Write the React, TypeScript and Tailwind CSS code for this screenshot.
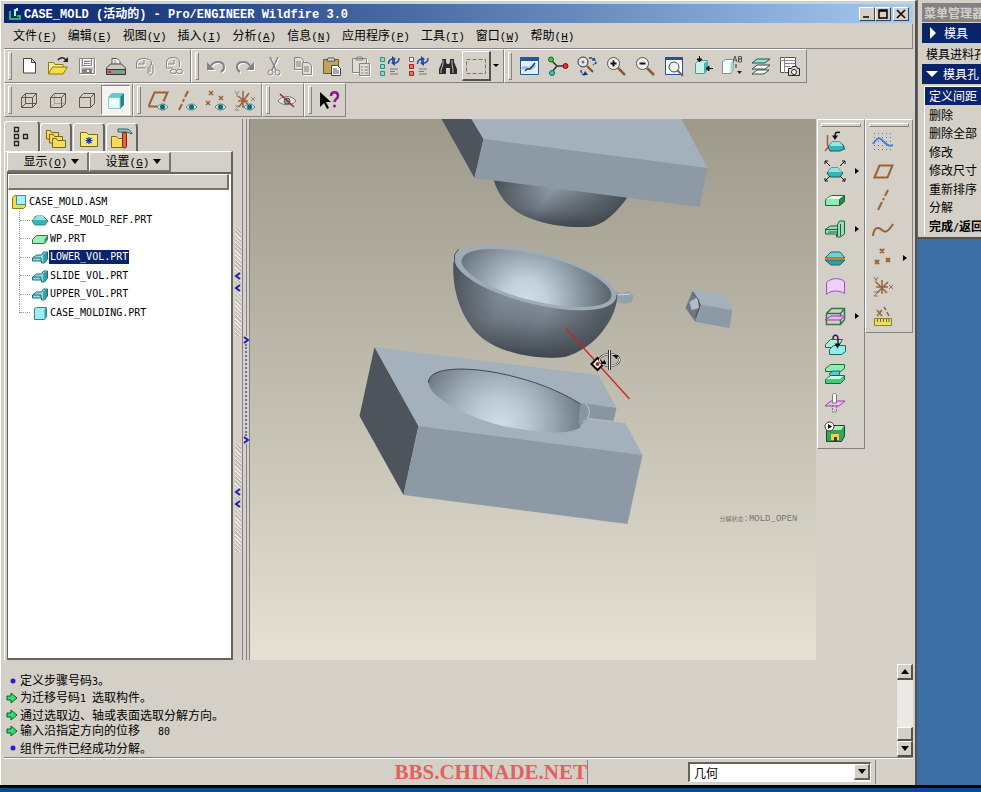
import type { ReactNode } from "react";

const teal = "#35b5b5";
const aqua = "#8fe6e2";
const brown = "#9c6238";

// Iconos de 24x24, uno por herramienta
const icons: Record<string, ReactNode> = {
  nuevo: <path d="M6.5 4.5h8l4 4v10.5h-12zM14.5 4.5v4h4" fill="#fff" stroke="#444" />,
  abrir: (
    <>
      <path d="M2.5 20V8.500h5l1.500 2h8V13" fill="#f7ee9a" stroke="#8a7a1a" />
      <path d="M2.500 20l4-7h15l-4.500 7z" fill="#f5df40" stroke="#8a7a1a" />
      <path d="M12 6c2-3 6-3 8 0" fill="none" stroke="#222" strokeWidth="1.500" />
      <path d="M22 3v5h-5z" fill="#222" />
    </>
  ),
  guardar: (
    <g fill="none" stroke="#848284">
      <path d="M4.500 4.500h15v15h-15z" />
      <path d="M7.500 4.500v7h9v-7M9 7.500h6M9 9.500h6" />
      <path d="M7.500 19v-4h9v4" fill="#848284" />
      <path d="M13 16v2" stroke="#fff" strokeWidth="2" />
    </g>
  ),
  imprimir: (
    <>
      <path d="M8 11V4.500h5l3 3V12" fill="#fff" stroke="#555" />
      <path d="M9.500 7h3M9.500 9h4" stroke="#888" />
      <path d="M2.500 14l4-4h11l4 4v3h-19z" fill="#c9c7c0" stroke="#444" />
      <path d="M2.500 15.500h19v5h-19z" fill="#8f958d" stroke="#333" />
      <path d="M4 18h3" stroke="#e02020" strokeWidth="2" />
      <path d="M14 18h5" stroke="#50c060" strokeWidth="2" />
    </>
  ),
  correo: (
    <g fill="none" stroke="#848284">
      <path d="M3.500 14v-5c0-6 15-6 15 0v2M3.500 14h9M5 10l6 0v-4" />
      <path d="M15 13v5c0 4 5 4 5 0v-6c0-2-3-2-3 0v6" />
    </g>
  ),
  enlace: (
    <g fill="none" stroke="#848284">
      <path d="M4.500 14V8c0-6 13-6 13 0v5M4.500 14h6M6 10h6V6" />
      <rect x="8.500" y="15.500" width="6" height="4" rx="2" />
      <rect x="14.500" y="15.500" width="6" height="4" rx="2" />
    </g>
  ),
  deshacer: (
    <>
      <path d="M7 12c3-6 13-5 13 1 0 2-1 4-3 5" fill="none" stroke="#848284" strokeWidth="2" />
      <path d="M3 8v8h8z" fill="#848284" />
    </>
  ),
  rehacer: (
    <>
      <path d="M17 12c-3-6-13-5-13 1 0 2 1 4 3 5" fill="none" stroke="#848284" strokeWidth="2" />
      <path d="M21 8v8h-8z" fill="#848284" />
    </>
  ),
  cortar: (
    <g fill="none" stroke="#848284">
      <path d="M8 3l6 13M16 3l-6 13" strokeWidth="1.500" />
      <circle cx="8.500" cy="18.500" r="2.500" />
      <circle cx="15.500" cy="18.500" r="2.500" />
    </g>
  ),
  copiar: (
    <g fill="#dedbd3" stroke="#848284">
      <path d="M3.500 3.500h6l3 3v9h-9zM5 8h5M5 10h5M5 12h5" />
      <path d="M11.500 8.500h6l3 3v9h-9zM13 13h5M13 15h5M13 17h5" />
    </g>
  ),
  pegar: (
    <>
      <path d="M3.500 5.500h15v14h-15z" fill="#c0a45c" stroke="#6d5a2c" />
      <path d="M7 7l1-3h6l1 3z" fill="#ddd" stroke="#555" />
      <path d="M11.500 11.500h6l3 3v7h-9z" fill="#fff" stroke="#444" />
      <path d="M13 15h4M13 17h6M13 19h6" stroke="#555" />
    </>
  ),
  especial: (
    <g fill="#dedbd3" stroke="#848284">
      <path d="M3.500 4.500h14v14h-14zM7 6l1-3h5l1 3z" />
      <path d="M10.500 9.500h10v12h-10zM12 13h2M12 16h2M12 19h2M15.500 13h4M15.500 16h4M15.500 19h4" />
    </g>
  ),
  regenerar: (
    <>
      <path d="M2.500 3.500h4v4h-4zM2.500 10.500h4v4h-4zM2.500 17.500h4v4h-4z" fill="#7fe0d0" stroke="#2f8f80" />
      <path d="M10.500 10c0-4 2-5 5-5M21 4c0 4-2 5-5 5" fill="none" stroke="#1f4fa0" strokeWidth="1.500" />
      <path d="M14 2l4 3-4 3zM17 6l-4 3 4 3z" fill="#1f4fa0" />
      <path d="M12 15h8M12 17.500h5M12 20h8" stroke="#777" />
    </>
  ),
  regenerar2: (
    <>
      <path d="M2.500 3.500h4v4h-4z" fill="#fff" stroke="#c04040" />
      <path d="M2.500 10.500h4v4h-4zM2.500 17.500h4v4h-4z" fill="#f07060" stroke="#b02020" />
      <path d="M10.500 10c0-4 2-5 5-5M21 4c0 4-2 5-5 5" fill="none" stroke="#1f4fa0" strokeWidth="1.500" />
      <path d="M14 2l4 3-4 3zM17 6l-4 3 4 3z" fill="#1f4fa0" />
      <path d="M12 15h8M12 17.500h5M12 20h8" stroke="#777" />
    </>
  ),
  buscar: (
    <>
      <path d="M6 5h4v3l1 2h2l1-2V5h4v3l3 7v5h-7v-6h-4v6H3v-5l3-7z" fill="#2b2b2b" />
      <path d="M7 6v4l-2 6v3M16 6v4l1 6v3" fill="none" stroke="#bbb" />
    </>
  ),
  seleccion: <path d="M2.500 5.500h19v14h-19z" fill="none" stroke="#777" strokeDasharray="4 2" />,
  repintar: (
    <>
      <path d="M3.500 3.500h18v17h-18z" fill="#e4f0fa" stroke="#2058a8" />
      <path d="M3 3h19v4H3z" fill="#2058a8" />
      <path d="M5 15c4-5 7 4 13-4" fill="none" stroke="#9cc4e4" strokeWidth="3" />
      <path d="M8 17l2-2h3l5-6" stroke="#203870" strokeWidth="1.500" />
    </>
  ),
  centro: (
    <>
      <path d="M5 6l6 6h9M11 12l-5 6" fill="none" stroke="#333" strokeWidth="1.500" />
      <circle cx="5" cy="5.500" r="2.500" fill="#3cc83c" stroke="#186018" />
      <circle cx="19.500" cy="12" r="2.500" fill="#e03030" stroke="#701010" />
      <circle cx="6" cy="19" r="2.500" fill="#30c8c0" stroke="#106060" />
    </>
  ),
  orientar: (
    <>
      <circle cx="8" cy="8" r="5" fill="#e5e8e6" stroke="#333" />
      <path d="M12 12l6 6" stroke="#8a4a20" strokeWidth="2" />
      <circle cx="8" cy="8" r="1.500" fill="#777" />
      <path d="M14 4h4v4M19 4l2 5-3 2M6 16c0 4 2 5 5 5" fill="none" stroke="#1f4fa0" strokeWidth="1.500" strokeDasharray="3 1" />
      <path d="M10 17l3 4h-5z" fill="#102f90" />
    </>
  ),
  acercar: (
    <>
      <path d="M14 14l7 7" stroke="#8a5a40" strokeWidth="2.500" />
      <circle cx="9.500" cy="9.500" r="6" fill="#f1f1ee" stroke="#555" />
      <path d="M6.500 9.500h6M9.500 6.500v6" stroke="#111" strokeWidth="2" />
    </>
  ),
  alejar: (
    <>
      <path d="M14 14l7 7" stroke="#8a5a40" strokeWidth="2.500" />
      <circle cx="9.500" cy="9.500" r="6" fill="#f1f1ee" stroke="#555" />
      <path d="M6.500 9.500h6" stroke="#111" strokeWidth="2" />
    </>
  ),
  ajustar: (
    <>
      <path d="M3.500 3.500h17v17h-17z" fill="#fff" stroke="#28509c" />
      <path d="M3 3h18v3H3z" fill="#28509c" />
      <path d="M15 16l6 6" stroke="#8a5a40" strokeWidth="2" />
      <circle cx="12" cy="13" r="5" fill="#eef4f4" stroke="#444" />
    </>
  ),
  reorientar: (
    <>
      <path d="M4.500 9.500l3-3h9v9l-3 4h-9z" fill="#c8f4f0" stroke="#509890" />
      <path d="M13 9.500v10l4-4v-9z" fill="#45b5ad" />
      <path d="M8.500 2v3M6 5h5L8.500 8zM22 14.500h-4M18 12v5l-3-2.500z" fill="#111" stroke="#111" />
    </>
  ),
  vistas: (
    <>
      <path d="M2.500 7.500l3-2h8v10l-3 4h-8z" fill="#f3ffff" stroke="#888" />
      <path d="M10.500 9v10l3-4V6z" fill="#a0d8d4" />
      <path d="M13 8l2-6 2 6M13.500 6h3M18.500 8V2.500h3v2.500h-3M18.500 5h3v3h-3" fill="none" stroke="#555" />
      <path d="M17 17h5l-2.500 3z" fill="#222" />
      <path d="M16 10v4" stroke="#333" />
    </>
  ),
  capas: (
    <g stroke="#30504c">
      <path d="M3 20l5-4h12l-5 4z" fill="#fff" />
      <path d="M3 15l5-4h13l-5 4z" fill="#fff" />
      <path d="M3 9l5-4h13l-5 4z" fill="#8ce4dc" />
    </g>
  ),
  gestor: (
    <>
      <path d="M2.500 3.500h15v15h-15z" fill="#fff" stroke="#555" />
      <path d="M2 6.500h16M6.500 3v16M7 9.500h10M7 12.500h5" stroke="#888" />
      <path d="M10.500 14.500h3l1-2h4l1 2h2v7h-11z" fill="#d8d8d0" stroke="#222" />
      <circle cx="16" cy="18" r="2.500" fill="#fff" stroke="#222" />
    </>
  ),
  alambre: (
    <path d="M4.500 9.500h11v10h-11zM8.500 5.500h11v10h-11zM4.500 9.500l4-4M15.500 9.500l4-4M15.500 19.500l4-4M4.500 19.500l4-4" fill="none" stroke="#5c5850" />
  ),
  oculta: (
    <>
      <path d="M8.500 5.500v10h11M4.500 19.500l4-4" fill="none" stroke="#aaa69c" />
      <path d="M4.500 9.500h11v10h-11zM4.500 9.500l4-4h11v10l-4 4M15.500 9.500l4-4" fill="none" stroke="#5c5850" />
    </>
  ),
  sinoculta: <path d="M4.500 9.500h11v10h-11zM4.500 9.500l4-4h11v10l-4 4M15.500 9.500l4-4" fill="none" stroke="#5c5850" />,
  sombreado: (
    <>
      <path d="M4 9l4-4h12l-4 4z" fill="#58d0d0" />
      <path d="M16 9l4-4v12l-4 4z" fill="#1c8888" />
      <path d="M4.500 9.500h11.500v11h-11.500z" fill="#eaffff" stroke="#88c8c8" />
    </>
  ),
  ojoPlano: <path d="M2.500 18.500l6-14h13l-4 9M2.500 18.500h9" fill="none" stroke={brown} strokeWidth="2" />,
  ojoEje: <path d="M13 3l-3 6M9 11l-1 3M7 16l-3 6" stroke={brown} strokeWidth="2" />,
  ojoPunto: (
    <path d="M5 3l4 4M9 3l-4 4M15 8l4 4M19 8l-4 4M2 13l4 4M6 13l-4 4" stroke={brown} strokeWidth="1.500" />
  ),
  ojoCsys: (
    <>
      <path d="M5 8l12 10M16 5L6 19M10 3v17M5 13h10" stroke={brown} strokeWidth="1.500" />
      <path d="M2 3l2 3 2-3M4 6v3M18 9l4 4M22 9l-4 4M2 18h4l-4 4h4" fill="none" stroke="#888" />
    </>
  ),
  girar: (
    <>
      <path d="M3 13c4-6 14-6 18 0-4 5-14 5-18 0z" fill="#e4e4e0" stroke="#777" />
      <circle cx="12" cy="13" r="3" fill="#6ca8a8" stroke="#555" />
      <path d="M5 6l14 13" stroke="#b02020" strokeWidth="1.500" />
    </>
  ),
  ayuda: (
    <>
      <path d="M3 4v15l4-4 3 6 2-1-3-6h5z" fill="#000" />
      <path d="M14 8c0-5 7-5 7 0 0 3-3.500 3-3.500 6" fill="none" stroke="#8a1a8a" strokeWidth="2.500" />
      <circle cx="17.500" cy="18" r="1.500" fill="#8a1a8a" />
    </>
  ),
  localizar: (
    <>
      <path d="M4.500 5v11M2 21l4-5 16 3" fill="none" stroke="#a06038" strokeWidth="1.500" />
      <path d="M5 17l4-5h8l4 4v3l-4 2H7z" fill={teal} stroke="#135c5c" />
      <path d="M6 16l3-4h8l3 4z" fill={aqua} />
      <path d="M17 2.500c-4-1-5 0-5 4" fill="none" stroke="#111" strokeWidth="1.500" />
      <path d="M9 5.500h6L12 10z" fill="#111" />
    </>
  ),
  contraer: (
    <>
      <path d="M4 14l4-5h7l5 5-3 4H7z" fill={teal} stroke="#135c5c" />
      <path d="M5 13l3-4h7l4 4z" fill={aqua} />
      <path d="M2 2l5 5M22 2l-5 5M2 22l5-5M22 22l-5-5M2 5V2h3M19 2h3v3M2 19v3h3M22 19v3h-3" fill="none" stroke="#111" />
    </>
  ),
  pieza: (
    <>
      <path d="M2.500 11.500l6-4h13v6l-5 4h-14z" fill="#8cecb4" stroke="#226a3c" />
      <path d="M3 11l6-3h12l-4 3z" fill="#e0ffe8" />
      <path d="M16.500 11.500v6l5-4v-6z" fill="#208850" stroke="#226a3c" />
    </>
  ),
  volumen: (
    <>
      <path d="M2.500 12l5-3h6l3-5h5v13l-4 3h-4v-3h-11z" fill="#9cdcbc" stroke="#20603c" />
      <path d="M3 12.500h11M14.500 8v11M17.500 7v12M5 15h9" fill="none" stroke="#20603c" />
    </>
  ),
  silueta: (
    <>
      <path d="M2 12l6-6h9l5 6z" fill="#68d4d8" stroke="#206870" />
      <path d="M2 14l6 5h9l5-5z" fill="#309ca0" stroke="#206870" />
      <path d="M2 13h20" stroke="#e0702c" strokeWidth="2" />
    </>
  ),
  superficie: <path d="M3.500 19.500v-12c5-5 13-5 18-1v12c-5-3-13-4-18 1z" fill="#ecd0f8" stroke="#a050b8" />,
  particion: (
    <>
      <path d="M3.500 9.500l5-5h13v11l-4 5h-14zM3.500 9.500h14v11M17.500 9.500l4-5" fill="none" stroke="#307848" strokeWidth="1.500" />
      <path d="M2 16l6-4h14l-5 4z" fill="#e8b8f0" stroke="#903ca0" />
    </>
  ),
  dividir: (
    <>
      <path d="M2.500 11.500l5-5h12l-3 5v3h-14z" fill="#a8f0dc" stroke="#206848" />
      <path d="M6.500 16.500l4-4h12v6l-4 3h-12z" fill="#94ece8" stroke="#206868" />
      <path d="M10 6c0-5 5-5 5 0v5" fill="none" stroke="#301850" strokeWidth="1.500" />
      <path d="M11.500 10.500h6l-3 5z" fill="#111" />
    </>
  ),
  apertura: (
    <>
      <path d="M2.500 6.500l5-4h14v4l-4 3h-15z" fill="#90f0b0" stroke="#186838" />
      <path d="M6 12l4-3h7l-1 5H8z" fill="#58c8e0" stroke="#206080" />
      <path d="M2.500 17.500l5-4h14v4l-4 4h-15z" fill="#48c878" stroke="#186838" />
      <path d="M3 17l5-3h12l-3 3z" fill="#c8ffd8" />
    </>
  ),
  eyector: (
    <>
      <path d="M2 15l6-5h14l-6 5z" fill="#ecb8f4" stroke="#8c4898" />
      <path d="M9.500 12V4c0-2 4-2 4 0v8z" fill="#fff" stroke="#777" />
      <path d="M9.500 14v7h4v-7" fill="none" stroke="#777" strokeDasharray="2 1" />
    </>
  ),
  catalogo: (
    <>
      <path d="M3.500 10.500l5-5h13v11l-3 5h-15z" fill="#34a45c" stroke="#164c28" />
      <path d="M4 10l5-4h12l-3 4z" fill="#a8f0bc" />
      <path d="M8 14h8v6h-2v-3h-3v3H8z" fill="#f0d040" />
      <path d="M11 17h3v4h-3z" fill="#702020" />
      <circle cx="6.500" cy="6.500" r="4.500" fill="#fff" stroke="#333" />
      <path d="M5 4v5l4-2.500z" fill="#111" />
    </>
  ),
  boceto: (
    <>
      <path d="M3 3.500h19M3 7.500h19M3 11.500h19M3 15.500h19M3 19.500h19" stroke="#4878c0" strokeDasharray="1 3" />
      <path d="M2 14c5-8 7-6 10-3s6 6 10 4" fill="none" stroke="#3c80dc" strokeWidth="2" />
    </>
  ),
  plano: <path d="M3.500 18.500l5-12h13l-5 12z" fill="none" stroke={brown} strokeWidth="2" />,
  eje: <path d="M17 2l-3 6M13 10l-1 2M11 14l-4 8" stroke={brown} strokeWidth="2" />,
  curva: <path d="M2 19c1-10 6-9 9-6s6 2 11-6" fill="none" stroke={brown} strokeWidth="2" />,
  puntos: <path d="M9 3l4 4M13 3l-4 4M4 14l4 4M8 14l-4 4M15 12l4 4M19 12l-4 4" stroke={brown} strokeWidth="2" />,
  csys: (
    <>
      <path d="M5 7l11 11M17 7L6 18M11 5v14M5 12h12" stroke={brown} strokeWidth="1.500" />
      <path d="M3 2l2 3 2-3M5 5v3M18 10l4 4M22 10l-4 4M3 17h4l-4 4h4" fill="none" stroke="#777" />
    </>
  ),
  medir: (
    <>
      <path d="M3.500 14.500h17v7h-17z" fill="#e8e060" stroke="#8c8428" />
      <path d="M6.500 15v3M9.500 15v3M12.500 15v3M15.500 15v3M18 15v3" stroke="#6c6418" />
      <path d="M6 6l5 6M11 6l-5 6M13 3l2 3M16 8l2 4" stroke={brown} strokeWidth="1.500" />
    </>
  ),
  arbol: <path d="M4.500 2.500h4v4h-4zM4.500 9.500h4v4h-4zM4.500 16.500h4v4h-4zM13.500 9.500h4v4h-4z" fill="none" stroke="#222" strokeWidth="1.300" />,
  carpetas: (
    <g fill="#f2dc58" stroke="#7c6814">
      <path d="M2.500 13V4.500h4l1 2h7V13z" />
      <path d="M5.500 17V8.500h4l1 2h8V17z" />
      <path d="M8.500 21.500v-9h4l1 2h8v7z" />
    </g>
  ),
  favoritos: (
    <>
      <path d="M3.500 20.500v-14h6l2 2h9v12z" fill="#f6e878" stroke="#7c6814" />
      <path d="M12 11v7M8.500 14.500h7M9.500 12l5 5M14.500 12l-5 5" stroke="#1838a0" strokeWidth="1.200" />
    </>
  ),
  conexiones: (
    <>
      <path d="M1.500 21.500v-11h5l2 2h7v9z" fill="#f2dc58" stroke="#7c6814" />
      <path d="M8 3h8c3 0 5 2 6 5l-5-2H8z" fill="#90c8d0" stroke="#345c64" />
      <path d="M12.500 6.500h4v14c0 2-4 2-4 0z" fill="#e46430" stroke="#80280c" />
    </>
  ),
};

// Texto CJK a 12px con las letras latinas en monoespaciada
function Mixed({ text }: { text: string }) {
  return (
    <>
      {text.split(/([\x20-\x7e]+)/).map((part, i) =>
        i % 2 ? <span key={i} className="font-['DejaVu_Sans_Mono',monospace] text-[10px] whitespace-pre">{part}</span> : part
      )}
    </>
  );
}

function Hot({ label, letter }: { label: string; letter: string }) {
  return (
    <>
      {label}
      <span className="font-['Liberation_Mono',monospace] text-[11px]">(<u>{letter}</u>)</span>
    </>
  );
}

const disabled = ["guardar", "correo", "enlace", "deshacer", "rehacer", "cortar", "copiar", "especial"];

function Icon({ name }: { name: string }) {
  return (
    <svg viewBox="0 0 24 24" className={`size-6 shrink-0 ${disabled.includes(name) ? "drop-shadow-[1px_1px_0_#fff]" : ""}`} fill="none">
      {icons[name]}
      {name.startsWith("ojo") && (
        <>
          <path d="M11 19c3-4 8-4 11 0-3 4-8 4-11 0z" fill="#bfe4e4" stroke="#4a8a8c" />
          <circle cx="16.500" cy="19" r="2.500" fill="#1c6470" />
        </>
      )}
    </svg>
  );
}

function Group({ names, children }: { names: string[]; children?: ReactNode }) {
  return (
    <div className="flex h-[34px] items-center border-t border-l border-t-white border-l-white border-r border-b border-r-[#848284] border-b-[#848284] pl-[3px] pr-0.5">
      <span className="mr-0.5 h-7 w-1 border border-white border-r-[#848284] border-b-[#848284]" />
      {names.map((n) => (
        <button
          key={n}
          aria-label={n}
          className={`flex h-[30px] w-[29px] items-center justify-center ${
            n === "sombreado" ? "border border-[#848284] border-r-white border-b-white bg-[#f4f3f0]" : ""
          } ${n === "seleccion" ? "border border-white border-r-2 border-b-2 border-r-[#55524d] border-b-[#55524d]" : ""}`}
        >
          <Icon name={n} />
        </button>
      ))}
      {children}
    </div>
  );
}

function SideGroup({ names, flyouts }: { names: string[]; flyouts: string[] }) {
  return (
    <div className="flex w-12 flex-col border border-white border-r-[#848284] border-b-[#848284] pt-[3px] pb-0.5">
      <span className="mx-[3px] h-1 border border-white border-r-[#848284] border-b-[#848284]" />
      {names.map((n) => (
        <button key={n} aria-label={n} className="flex h-[29px] items-center pl-[5px]">
          <Icon name={n} />
          {flyouts.includes(n) && (
            <svg viewBox="0 0 4 6" className="ml-2 h-1.5 w-1"><path d="M0 0l4 3-4 3z" /></svg>
          )}
        </button>
      ))}
    </div>
  );
}

const menus = [
  ["文件", "F"], ["编辑", "E"], ["视图", "V"], ["插入", "I"], ["分析", "A"],
  ["信息", "N"], ["应用程序", "P"], ["工具", "T"], ["窗口", "W"], ["帮助", "H"],
];

const parts = [
  { name: "CASE_MOLD_REF.PRT", kind: "ref" },
  { name: "WP.PRT", kind: "wp" },
  { name: "LOWER_VOL.PRT", kind: "vol", selected: true },
  { name: "SLIDE_VOL.PRT", kind: "vol" },
  { name: "UPPER_VOL.PRT", kind: "vol" },
  { name: "CASE_MOLDING.PRT", kind: "molding" },
];

const messages = [
  { text: "定义步骤号码3。", arrow: false },
  { text: "为迁移号码1 选取构件。", arrow: true },
  { text: "通过选取边、轴或表面选取分解方向。", arrow: true },
  { text: "输入沿指定方向的位移   80", arrow: true },
  { text: "组件元件已经成功分解。", arrow: false },
];

const holeMenu = ["定义间距", "删除", "删除全部", "修改", "修改尺寸", "重新排序", "分解", "完成/返回"];

function PartIcon({ kind }: { kind: string }) {
  return (
    <svg viewBox="0 0 18 14" className="h-3.5 w-[18px] shrink-0" fill="none">
      {kind === "ref" && (
        <>
          <path d="M1 8l4-5h7l5 5-3 4H4z" fill={teal} stroke="#3c8888" />
          <path d="M2 7l4-4h6l3 4z" fill={aqua} />
        </>
      )}
      {kind === "wp" && (
        <>
          <path d="M1.500 7.500l4-4h11v4l-3 4h-12z" fill="#98f0b8" stroke="#287848" />
          <path d="M13.500 7.500v4l3-4v-4z" fill="#309858" />
        </>
      )}
      {kind === "vol" && (
        <>
          <path d="M1.500 8l4-3h5l2-3h4v7l-3 4h-3v-2h-9z" fill="#8cdce0" stroke="#206878" />
          <path d="M2 8h8v3M13 4v8" stroke="#206878" />
          <path d="M13 4l3-2v7l-3 4z" fill="#309ca4" />
        </>
      )}
      {kind === "molding" && (
        <>
          <path d="M3.500 2.500l2-1h10v9l-2 3h-10z" fill="#9ceef4" stroke="#308490" />
          <path d="M13.500 3v10l2-3V1.500z" fill="#309ca4" />
        </>
      )}
    </svg>
  );
}

function ModelTree() {
  return (
    <div className="flex w-[233px] shrink-0 flex-col pt-0.5 pl-1">
      <div className="flex h-[30px] items-end" role="tablist">
        {["arbol", "carpetas", "favoritos", "conexiones"].map((n, i) => (
          <button
            key={n}
            role="tab"
            aria-label={n}
            aria-selected={i === 0}
            className={`flex items-center justify-center rounded-t-sm border-t border-l border-white border-r-2 border-r-[#66635d] ${
              i === 0 ? "h-[30px] w-9" : "mr-px h-7 w-8"
            }`}
          >
            <Icon name={n} />
          </button>
        ))}
      </div>
      <div className="flex flex-1 flex-col border-t border-l border-white border-r-2 border-r-[#66635d] pl-0.5">
        <div className="flex h-5">
          {[["显示", "O"], ["设置", "G"]].map(([label, letter]) => (
            <button
              key={label}
              className="flex h-5 w-[82px] items-center justify-center gap-1 border-t border-l border-white border-r-2 border-b-2 border-r-[#77746e] border-b-[#77746e] pl-2"
            >
              <span className="leading-4"><Hot label={label} letter={letter} /></span>
              <svg viewBox="0 0 8 5" className="h-[5px] w-2"><path d="M0 0h8L4 5z" /></svg>
            </button>
          ))}
        </div>
        <div className="flex flex-1 flex-col border-t-2 border-l border-[#66635d] border-b-2 border-b-[#66635d] bg-white">
          <div className="mr-0.5 h-4 border border-white border-r-2 border-b-2 border-r-[#77746e] border-b-[#77746e] bg-[#d4d0c8]" />
          <div className="flex flex-1 flex-col pt-[3px] pl-[3px]">
            <div className="flex h-[18px] items-center gap-0.5">
              <svg viewBox="0 0 16 16" className="size-4">
                <path d="M1.500 3.500l2-2h11v11l-2 2h-11z" fill="#f4d848" stroke="#907818" />
                <path d="M5.500 1.500h9v9h-9z" fill="#a8f0f4" stroke="#409098" />
              </svg>
              <span className="font-['DejaVu_Sans_Mono',monospace] text-[10px]">CASE_MOLD.ASM</span>
            </div>
            <ul className="ml-2 flex h-[111px] flex-col justify-between">
              {parts.map((p, i) => (
                <li key={p.name} className="flex h-[18px] items-center">
                  <span className={`border-l border-dotted border-[#999] ${i === parts.length - 1 ? "h-[9px] self-start" : "h-[19px]"}`} />
                  <span className="mr-px w-2.5 border-t border-dotted border-[#999]" />
                  <PartIcon kind={p.kind} />
                  <span
                    className={`font-['DejaVu_Sans_Mono',monospace] px-px text-[10px] leading-[14px] ${
                      p.selected ? "bg-[#0a246a] text-white" : ""
                    }`}
                  >
                    {p.name}
                  </span>
                </li>
              ))}
            </ul>
          </div>
        </div>
      </div>
    </div>
  );
}

function Chevron({ d }: { d: string }) {
  return (
    <svg viewBox="0 0 8 8" className="size-2" fill="none">
      <path d={d} stroke="#2020b0" strokeWidth="2" />
    </svg>
  );
}

function Splitter() {
  return (
    <div className="flex w-[17px] shrink-0">
      <div className="flex w-[9px] flex-col items-center justify-center gap-[108px]">
        {[0, 1].map((i) => (
          <div
            key={i}
            className="flex h-[108px] w-1.5 flex-col items-center justify-center gap-1 bg-[repeating-linear-gradient(45deg,#f0eee9_0_1px,#d4d0c8_1px_2px,#bcb8b0_2px_3px)]"
          >
            <span className="bg-[#d4d0c8]"><Chevron d="M6 1L2 4l4 3" /></span>
            <span className="bg-[#d4d0c8]"><Chevron d="M6 1L2 4l4 3" /></span>
          </div>
        ))}
      </div>
      <div className="flex w-2 flex-col items-center border-x border-[#848284]">
        <div className="w-0.5 flex-1 border-r border-[#848284]" />
        <div className="flex h-[108px] flex-col items-center justify-between">
          <Chevron d="M2 1l4 3-4 3" />
          <span className="flex-1 border-l-2 border-dotted border-[#6c6ca8]" />
          <Chevron d="M2 1l4 3-4 3" />
        </div>
        <div className="w-0.5 flex-1 border-r border-[#848284]" />
      </div>
    </div>
  );
}

// Vista explotada del molde
function Viewport() {
  return (
    <div className="min-w-0 flex-1 bg-linear-to-b from-[#9d9a8c] to-[#e5e1d4]">
      <svg viewBox="250 119 567 541" preserveAspectRatio="xMidYMid slice" className="h-full w-full">
        <defs>
          <linearGradient id="bulge" x1="0" y1="0" x2="1" y2="0.200">
            <stop offset="0" stopColor="#434a51" />
            <stop offset="0.450" stopColor="#8b98a3" />
            <stop offset="1" stopColor="#4b535a" />
          </linearGradient>
          <linearGradient id="shade" x1="0.550" y1="0.250" x2="0.450" y2="1">
            <stop offset="0" stopColor="#40464d" stopOpacity="0" />
            <stop offset="0.500" stopColor="#40464d" stopOpacity="0.350" />
            <stop offset="1" stopColor="#3e454c" />
          </linearGradient>
          <linearGradient id="body" x1="0" y1="0" x2="1" y2="0.200">
            <stop offset="0" stopColor="#454d54" />
            <stop offset="0.350" stopColor="#8895a1" />
            <stop offset="0.650" stopColor="#8f9ca8" />
            <stop offset="1" stopColor="#545d65" />
          </linearGradient>
          <radialGradient id="inner" gradientUnits="userSpaceOnUse" cx="532" cy="302" r="84">
            <stop offset="0" stopColor="#cfdde9" />
            <stop offset="0.250" stopColor="#c2d0dc" />
            <stop offset="0.550" stopColor="#97a5b1" />
            <stop offset="0.800" stopColor="#76828c" />
            <stop offset="1" stopColor="#5b656e" />
          </radialGradient>
          <radialGradient id="cavity" gradientUnits="userSpaceOnUse" cx="500" cy="424" r="92">
            <stop offset="0" stopColor="#d0deea" />
            <stop offset="0.300" stopColor="#bac8d4" />
            <stop offset="0.600" stopColor="#97a5b0" />
            <stop offset="1" stopColor="#616b75" />
          </radialGradient>
        </defs>

        <path d="M442 119h30l12 20-9 39z" fill="#4d545b" />
        <path d="M472 119h210l26 49-224-29z" fill="#a4b1bc" />
        <path d="M494 179l135 17c-11 15-25 31-43 31-26 1-56-6-71-17-12-9-18-20-21-31z" fill="url(#bulge)" />
        <path d="M494 179l135 17c-11 15-25 31-43 31-26 1-56-6-71-17-12-9-18-20-21-31z" fill="url(#shade)" />
        <path d="M484 139l224 29-8 39-225-29z" fill="#8d9aa5" />

        <path d="M616 291l6 3 8-3 4 5-2 6-7 2-11-3z" fill="#93a1ac" />
        <path d="M618 295l13-1" stroke="#d0dae2" />
        <path d="M454 262c-2 28 8 60 30 77 20 15 56 21 81 18 30-8 52-38 53-62l-80-10z" fill="url(#body)" />
        <path d="M454 262c-2 28 8 60 30 77 20 15 56 21 81 18 30-8 52-38 53-62l-80-10z" fill="url(#shade)" />
        <ellipse cx="536" cy="278" rx="83" ry="26" transform="rotate(14 536 278)" fill="#9eacb8" />
        <ellipse cx="537" cy="278" rx="77" ry="23" transform="rotate(14 537 278)" fill="url(#inner)" />
        <path d="M455 265v-10l4-6" fill="none" stroke="#4b5359" />

        <path d="M693 291l9 13-6 18-10-14z" fill="#6d7880" />
        <path d="M690 302l8-5 2 11-8 2z" fill="#b0bcc6" />
        <path d="M693 291l32 3 8 16-31-5z" fill="#a4b1bc" />
        <path d="M702 305l31 5-3 18-34-6z" fill="#8d9aa5" />
        <path d="M693 292l6 8 1 7-4 10" fill="none" stroke="#495158" />

        <path d="M375 347l44 79-15 69-44-79z" fill="#4e545b" />
        <path d="M375 347l224 28 18 33-27-4-2 15 38 4 17 32-224-29z" fill="#a4b1bc" />
        <path d="M590 404l27 4-3 13-26-3z" fill="#8896a1" />
        <path d="M419 426l224 29-15 69-224-29z" fill="#8d9aa5" />
        <path d="M578 403l12 1-2 16-10 8z" fill="#8796a1" />
        <path d="M429 383c-1-18 46-17 87-6 28 7 51 18 65 27l-2 17 2 6c-10 8-36 6-61 2-48-7-90-31-91-46z" fill="url(#cavity)" />
        <path d="M429 383c-1-18 46-17 87-6 28 7 51 18 65 27" fill="none" stroke="#434a50" />
        <path d="M586 404c6 5 5 15-3 18" fill="none" stroke="#bdc8d0" />

        <path d="M567 329l63 70" stroke="#d02020" strokeWidth="1.200" />
        <path d="M598 358l6 6-6 6-6-6z" fill="#fff" stroke="#000" strokeWidth="2" />
        <circle cx="598" cy="364" r="2" fill="#c01818" />
        <ellipse cx="610" cy="360" rx="10" ry="6" fill="none" stroke="#333" strokeWidth="2" />
        <ellipse cx="610" cy="360" rx="10" ry="6" fill="none" stroke="#fff" />
        <path d="M610 350v20" stroke="#333" strokeWidth="3" />
        <path d="M610 350v20" stroke="#fff" />
        <path d="M613 355h6l-2 4zM601 364h6l-2-4z" />
        <text x="720" y="521" fill="#77756c" fontSize="6" fontFamily="Noto Sans CJK SC, sans-serif">
          分解状态<tspan fontSize="9" fontFamily="Liberation Mono, monospace">:MOLD_OPEN</tspan>
        </text>
      </svg>
    </div>
  );
}

function ScrollButton({ d }: { d: string }) {
  return (
    <button aria-label="scroll" className="flex size-4 items-center justify-center border border-white border-r-2 border-b-2 border-r-[#55524d] border-b-[#55524d] bg-[#d4d0c8]">
      <svg viewBox="0 0 8 5" className="h-[5px] w-2"><path d={d} /></svg>
    </button>
  );
}

function TitleButton({ label, d }: { label: string; d: string }) {
  return (
    <button aria-label={label} className="flex h-3.5 w-4 items-center justify-center border border-white border-r-[#404040] border-b-[#404040] bg-[#d4d0c8]">
      <svg viewBox="0 0 10 10" className="size-2.5" fill="none" stroke="#000"><path d={d} strokeWidth="1.500" /></svg>
    </button>
  );
}

function MenuManager() {
  return (
    <aside className="w-16 shrink-0 overflow-hidden">
      <div className="w-24 border-b-2 border-l border-[#55524d] border-l-[#66635d] bg-[#d4d0c8] pt-[3px] pb-0.5 pl-1">
        <h2 className="h-[19px] bg-[#848284] pl-0.5 leading-[19px] font-bold whitespace-nowrap text-[#d4d0c8]">菜单管理器</h2>
        <div className="mt-px flex h-5 items-center gap-2 bg-[#0a246a] pl-2 text-white">
          <svg viewBox="0 0 6 12" className="h-3 w-1.5" fill="#fff"><path d="M0 0l6 6-6 6z" /></svg>
          模具
        </div>
        <div className="h-[21px] pl-1 leading-[21px] whitespace-nowrap">模具进料孔</div>
        <div className="flex h-5 items-center gap-[5px] bg-[#0a246a] pl-1 text-white">
          <svg viewBox="0 0 12 6" className="h-1.5 w-3" fill="#fff"><path d="M0 0h12L6 6z" /></svg>
          模具孔
        </div>
        <ul className="mt-0.5 ml-0.5 flex h-[149px] flex-col justify-between border-t border-l border-white">
          {holeMenu.map((item, i) => (
            <li
              key={item}
              className={`h-[18px] pl-1 leading-[18px] ${i === 0 ? "bg-[#0a246a] text-white" : ""} ${
                i === holeMenu.length - 1 ? "font-bold" : ""
              }`}
            >
              <Mixed text={item} />
            </li>
          ))}
        </ul>
      </div>
    </aside>
  );
}

export default function App() {
  return (
    <div className="flex min-h-screen flex-col overflow-hidden bg-[#3b6ea5] font-['Noto_Sans_CJK_SC',sans-serif] text-xs text-black">
      <div className="flex flex-1">
        <main className="flex min-w-0 flex-1 flex-col border-t border-l border-white border-r-2 border-r-[#55524d] bg-[#d4d0c8] pt-[3px] pr-0.5 pl-[3px]">
          <header className="flex h-[19px] shrink-0 items-center bg-linear-to-r from-[#0a246a] to-[#a6caf0] px-1 text-white">
            <svg viewBox="0 0 14 14" className="mr-0.5 size-3.5" fill="none">
              <path d="M2 4v8h10V9H9" stroke="#30b070" strokeWidth="2" />
              <path d="M9 1v2H7v6" stroke="#b0f0e0" strokeWidth="2" />
            </svg>
            <h1 className="flex-1 truncate leading-[19px] font-bold">
              <span className="font-['Liberation_Mono','Noto_Sans_CJK_SC',monospace]">CASE_MOLD (活动的) - Pro/ENGINEER Wildfire 3.0</span>
            </h1>
            <TitleButton label="min" d="M1 8h6" />
            <TitleButton label="max" d="M1 1h8v8H1zM1 2h8" />
            <span className="w-0.5" />
            <TitleButton label="close" d="M1 1l8 8M9 1L1 9" />
          </header>

          <nav className="mt-px flex h-[25px] shrink-0 items-center gap-[11px] border-r border-b border-[#848284] pl-[9px]">
            {menus.map(([label, letter]) => (
              <button key={letter} className="leading-4 whitespace-nowrap">
                <Hot label={label} letter={letter} />
              </button>
            ))}
          </nav>

          <div className="flex">
            <Group names={["nuevo", "abrir", "guardar", "imprimir", "correo", "enlace"]} />
            <Group names={["deshacer", "rehacer", "cortar", "copiar", "pegar", "especial", "regenerar", "regenerar2", "buscar", "seleccion"]}>
              <svg viewBox="0 0 10 4" className="h-1 w-2.5"><path d="M2 0h6L5 3z" /></svg>
            </Group>
            <Group names={["repintar", "centro", "orientar", "acercar", "alejar", "ajustar", "reorientar", "vistas", "capas", "gestor"]} />
          </div>
          <div className="mb-0.5 flex">
            <Group names={["alambre", "oculta", "sinoculta", "sombreado"]} />
            <Group names={["ojoPlano", "ojoEje", "ojoPunto", "ojoCsys"]} />
            <Group names={["girar"]} />
            <Group names={["ayuda"]} />
          </div>

          <section className="-ml-1 flex flex-1">
            <ModelTree />
            <Splitter />
            <Viewport />
            <div className="flex items-start pl-px">
              <SideGroup
                names={["localizar", "contraer", "pieza", "volumen", "silueta", "superficie", "particion", "dividir", "apertura", "eyector", "catalogo"]}
                flyouts={["contraer", "volumen", "particion"]}
              />
              <SideGroup names={["boceto", "plano", "eje", "curva", "puntos", "csys", "medir"]} flyouts={["puntos"]} />
            </div>
          </section>

          <section className="flex h-[98px] shrink-0 justify-between border-b border-[#848284]">
            <ul className="flex h-[84px] flex-col justify-between self-end pb-px">
              {messages.map((m) => (
                <li key={m.text} className="flex h-4 items-center gap-0.5 leading-4 whitespace-pre">
                  <svg viewBox="0 0 12 12" className="ml-0.5 size-3">
                    {m.arrow ? (
                      <path d="M1 4h4V1l6 5-6 5V8H1z" fill="#30e070" stroke="#0c5c28" />
                    ) : (
                      <circle cx="7" cy="6" r="2.500" fill="#2020d0" />
                    )}
                  </svg>
                  <span><Mixed text={m.text} /></span>
                </li>
              ))}
            </ul>
            <div className="mt-1 flex w-4 flex-col bg-[#ebe9e5]">
              <ScrollButton d="M0 5h8L4 0z" />
              <div className="flex-1" />
              <div className="h-3.5 border border-white border-r-2 border-b-2 border-r-[#55524d] border-b-[#55524d] bg-[#d4d0c8]" />
              <ScrollButton d="M0 0h8L4 5z" />
            </div>
          </section>

          <footer className="flex h-[27px] shrink-0 items-center border-t border-white">
            <div className="flex h-6 flex-1 items-center justify-end border-r border-[#848284]">
              <span className="font-['Liberation_Serif',serif] text-[21px] leading-6 font-bold text-[#e2605e]">BBS.CHINADE.NET</span>
            </div>
            <div className="flex w-[325px] items-center pl-[100px]">
              <div className="relative w-[183px]">
                <select aria-label="过滤器" className="h-5 w-full appearance-none border-t-2 border-l-2 border-[#66635d] border-r border-b border-r-white border-b-white bg-white pl-1 leading-4">
                  <option>几何</option>
                </select>
                <span className="pointer-events-none absolute top-0.5 right-px flex size-4 items-center justify-center border border-white border-r-2 border-b-2 border-r-[#66635d] border-b-[#66635d] bg-[#d4d0c8]">
                  <svg viewBox="0 0 8 5" className="h-[5px] w-2"><path d="M0 0h8L4 5z" /></svg>
                </span>
              </div>
              <span className="ml-1 h-6 border-l border-[#848284]" />
            </div>
          </footer>
        </main>
        <MenuManager />
      </div>
      <div className="h-[7px] shrink-0 border-t-3 border-black bg-[#0a4a8e]" />
    </div>
  );
}
